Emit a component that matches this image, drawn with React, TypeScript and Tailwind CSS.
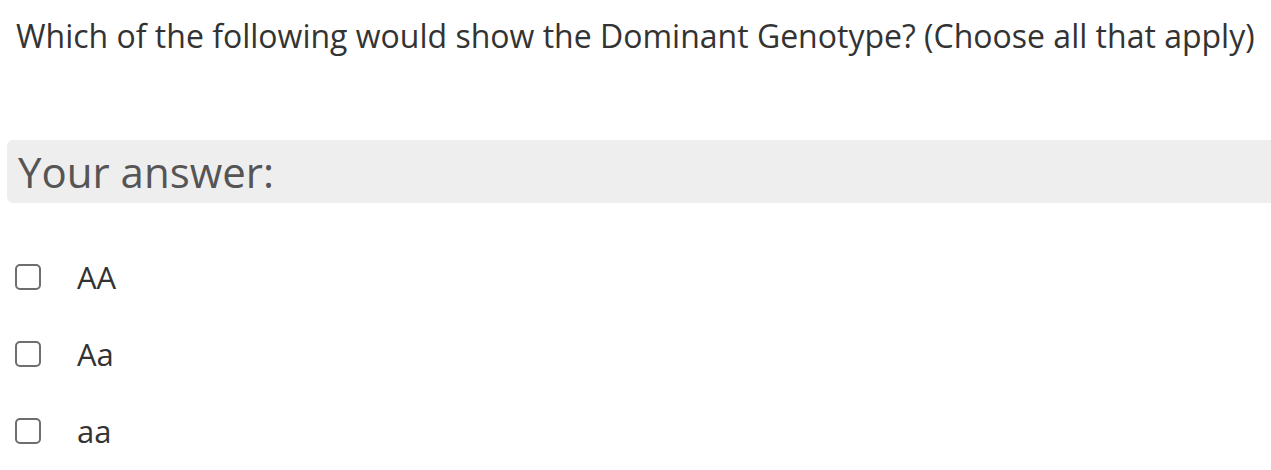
export default function App() {
  const options = ["AA", "Aa", "aa"];
  return (
    <div className="w-[1271px] h-[470px] overflow-hidden bg-white font-['Open_Sans',sans-serif]">
      <p className="pl-[16px] pt-[14px] text-[32px] leading-[44px] text-[#333333]">
        Which of the following would show the Dominant Genotype? (Choose all that apply)
      </p>
      <div className="ml-[7px] mt-[82px] h-[63px] rounded-l-[6px] bg-[#eeeeee] pl-[11px] flex items-center">
        <span className="text-[42px] leading-none text-[#555555]">Your answer:</span>
      </div>
      <div className="mt-[61px] flex flex-col gap-[51px] pl-[15px]">
        {options.map((o) => (
          <label key={o} className="flex items-center h-[26px]">
            <span className="w-[26px] h-[26px] rounded-[5px] border-2 border-[#6e6e6e] bg-white" />
            <span className="ml-[36px] text-[31px] text-[#333333] leading-none">{o}</span>
          </label>
        ))}
      </div>
    </div>
  );
}
